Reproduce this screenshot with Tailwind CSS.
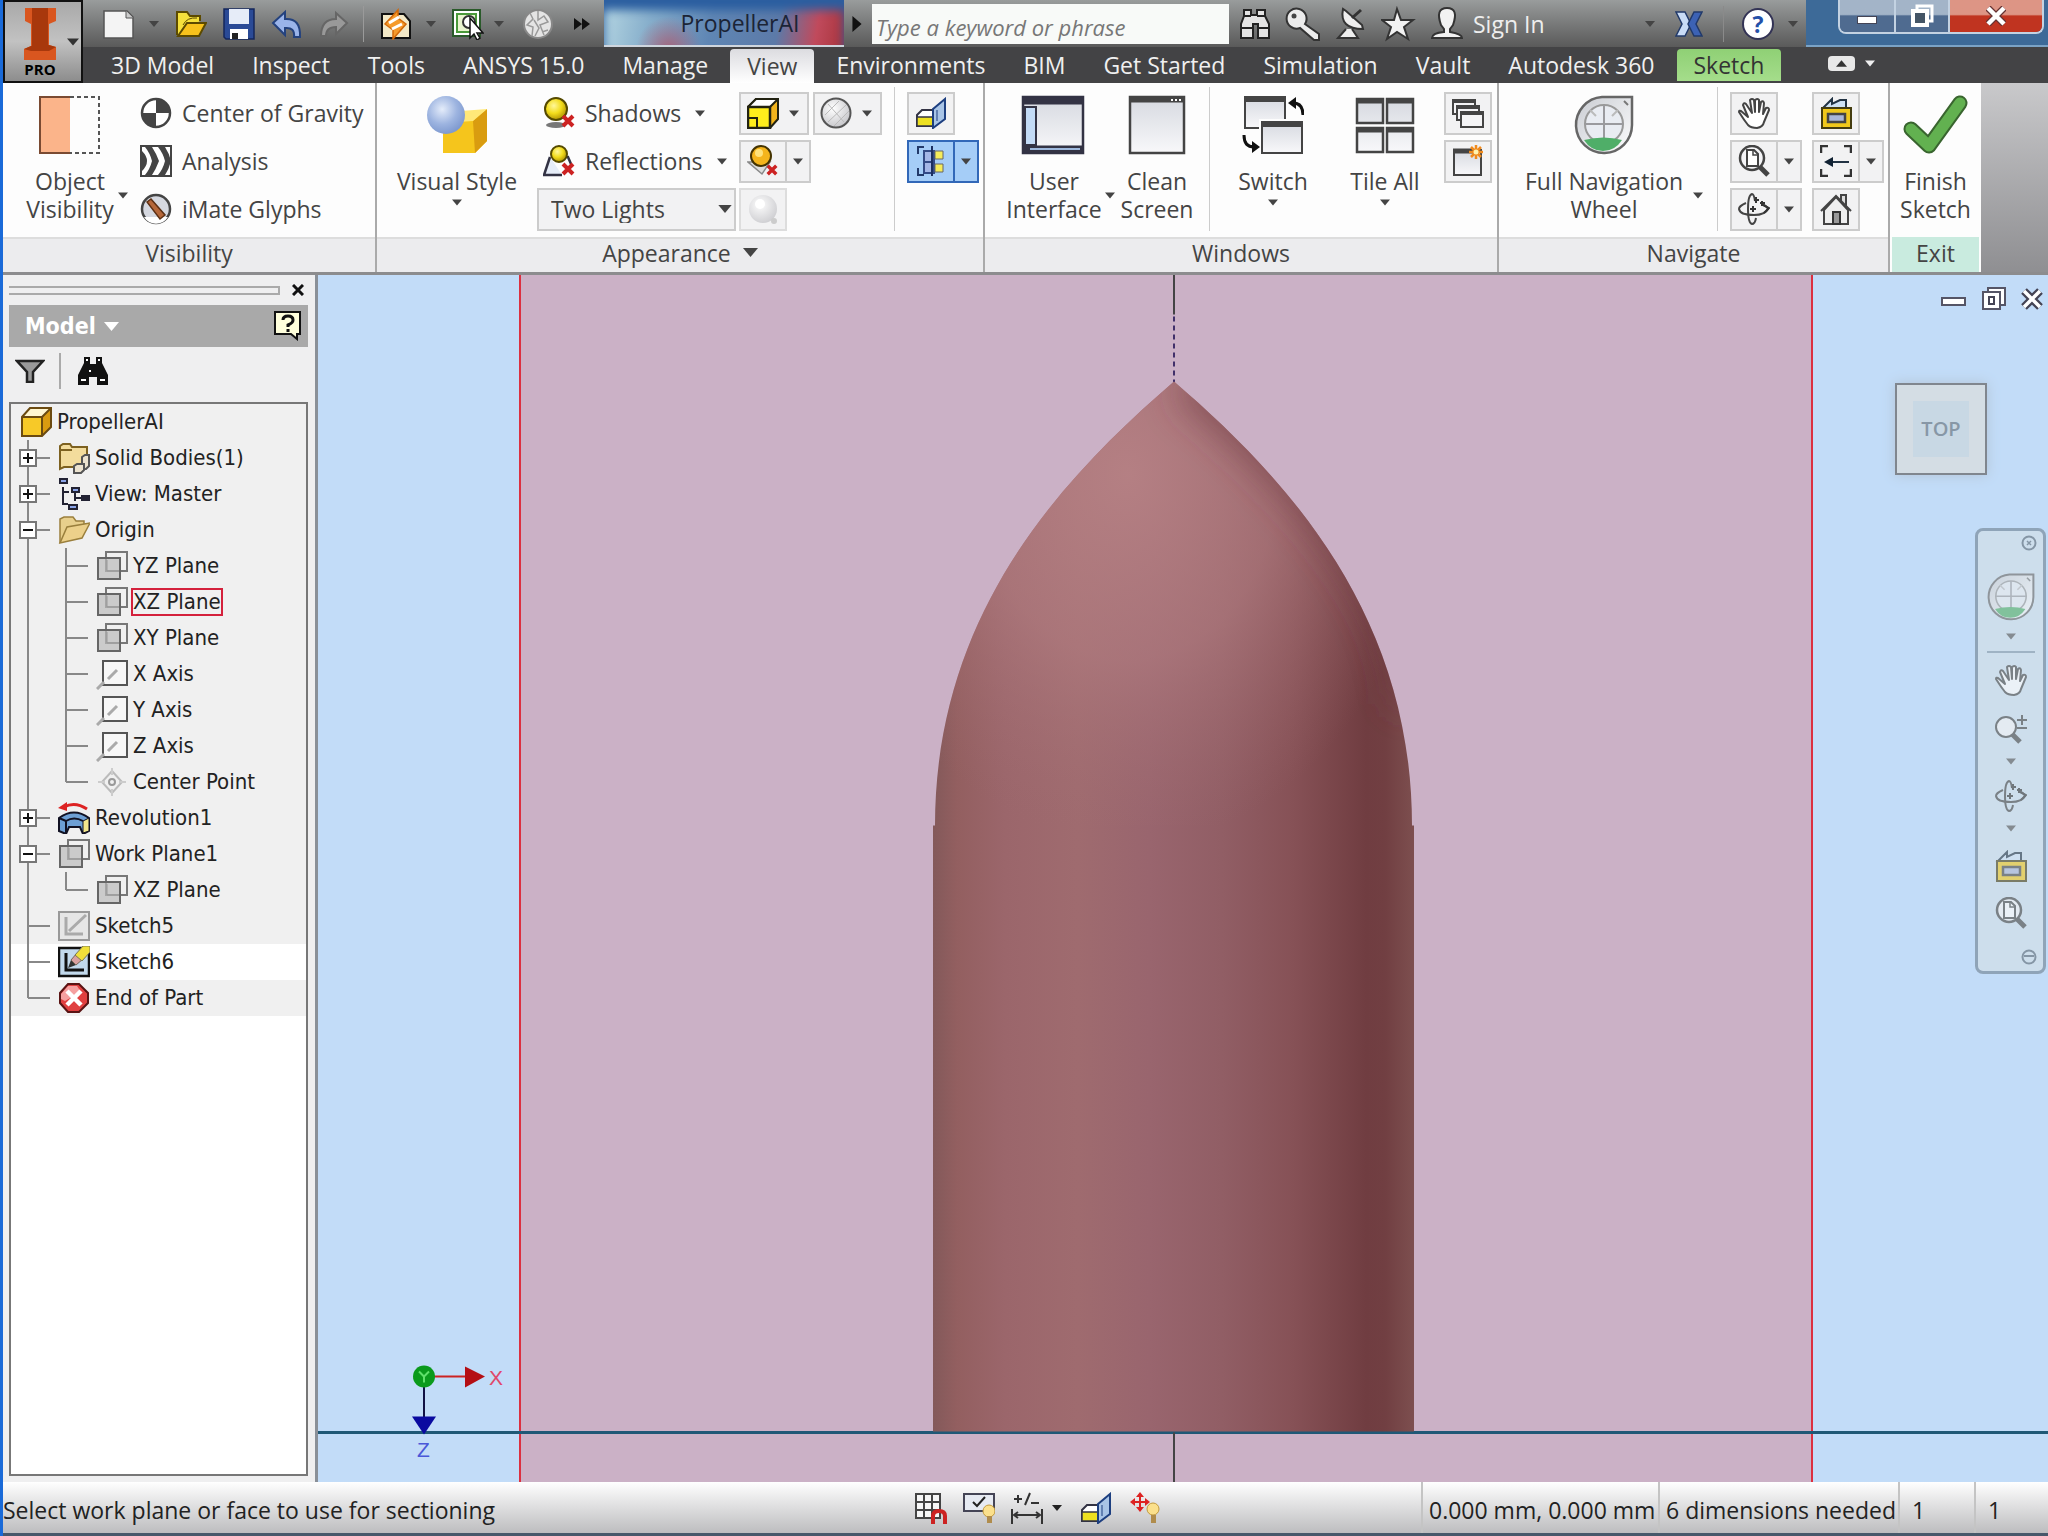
<!DOCTYPE html>
<html lang="en">
<head>
  <meta charset="UTF-8" />
  <meta name="viewport" content="width=device-width, initial-scale=1.0"/>
  <title>PropellerAI</title>
  <script src="https://cdn.jsdelivr.net/npm/@tailwindcss/browser@4"></script>
</head>
<body class="h-screen flex flex-col overflow-hidden border-l-3 border-[#1a6ad8] bg-[#efeff0] font-['Open_Sans','Noto_Sans',sans-serif] text-[23px] leading-7 text-[#444]">

  <!-- shared icons -->
  <svg class="absolute size-0">
    <defs>
      <linearGradient id="glass" x1="0" y1="0" x2="1" y2="1"><stop offset="0" stop-color="#c9ccd2"/><stop offset="1" stop-color="#fdfdfe"/></linearGradient>
      <linearGradient id="pane" x1="0" y1="0" x2="0" y2="1"><stop offset="0" stop-color="#d6d9e0"/><stop offset="1" stop-color="#f8f8fa"/></linearGradient>
      <radialGradient id="ball" cx=".4" cy=".35" r=".7"><stop offset="0" stop-color="#fff79a"/><stop offset=".5" stop-color="#f2dc1c"/><stop offset="1" stop-color="#a88a00"/></radialGradient>
      <radialGradient id="blueball" cx=".4" cy=".35" r=".65"><stop offset="0" stop-color="#e4ecfa"/><stop offset=".6" stop-color="#9db4e0"/><stop offset="1" stop-color="#7f9ad0"/></radialGradient>
      <radialGradient id="grayball" cx=".4" cy=".35" r=".7"><stop offset="0" stop-color="#fff"/><stop offset="1" stop-color="#c4c4c8"/></radialGradient>
    </defs>
    <symbol id="caret" viewBox="0 0 10 6"><path d="M0 0h10L5 6z" fill="currentColor"/></symbol>
    <symbol id="redx" viewBox="0 0 14 14"><path d="M2 2l10 10M12 2L2 12" stroke="#c22" stroke-width="4"/></symbol>
    <symbol id="plane" viewBox="0 0 32 32">
      <rect x="10" y="2" width="21" height="19" fill="#f0f0f0" stroke="#777" stroke-width="2"/>
      <rect x="2" y="8" width="22" height="21" fill="#bbb" fill-opacity=".7" stroke="#666" stroke-width="2"/>
      <path d="M11 10v11h12" fill="none" stroke="#999"/>
    </symbol>
    <symbol id="axis" viewBox="0 0 32 32">
      <rect x="7" y="3" width="24" height="24" fill="#f7f7f7" stroke="#555" stroke-width="2"/>
      <path d="M1 31l7-7M12 21l9-9" stroke="#aaa" stroke-width="3"/>
    </symbol>
    <symbol id="point" viewBox="0 0 32 32">
      <path d="M16 5l10 11-10 11L6 16z" fill="none" stroke="#bbb" stroke-width="2"/>
      <path d="M16 2v7M16 23v7M2 16h7M23 16h7" stroke="#ccc" stroke-width="2"/><circle cx="16" cy="16" r="3" fill="none" stroke="#999" stroke-width="2"/>
    </symbol>
    <symbol id="part" viewBox="0 0 32 32">
      <path d="M2 11L10 2h21L22 11z" fill="#fff6d0"/><path d="M22 11l9-9v19l-9 9z" fill="#d99a10"/><path d="M2 11h20v19H2z" fill="#f7c928"/>
      <path d="M2 11L10 2h21v19l-9 9H2zM2 11h20M22 11l9-9M22 11v19" fill="none" stroke="#6b4a10" stroke-width="2"/>
    </symbol>
    <symbol id="bodies" viewBox="0 0 32 32">
      <path d="M2 4l3-2h7l2 3h15v20H6l-4 2z" fill="#f3dc9c" stroke="#7d6120" stroke-width="2"/><path d="M2 8h12" stroke="#7d6120" stroke-width="2"/>
      <path d="M24 15l3-2h4v11l-3 3h-4z" fill="#ece3cf" stroke="#555" stroke-width="2"/><path d="M16 24l3-2h7v6l-3 3h-7z" fill="#ece3cf" stroke="#555" stroke-width="2"/>
    </symbol>
    <symbol id="views" viewBox="0 0 32 32">
      <path d="M1 3h9M13 12h9M23 20h9M10 29h10" stroke="#223" stroke-width="6"/><path d="M5 9v17h5M5 14h6M17 15v8M17 20h6" fill="none" stroke="#223" stroke-width="2"/><path d="M3 3h5M15 12h5M12 29h6" stroke="#8aa4e8" stroke-width="2"/>
    </symbol>
    <symbol id="folder" viewBox="0 0 32 32">
      <path d="M2 29V5l4-2h9l3 4h8v4" fill="#e8cf8c" stroke="#9a7f3c" stroke-width="1.5"/><path d="M2 29L9 13l23-4-8 15z" fill="#ecd08a" stroke="#9a7f3c" stroke-width="1.5"/>
    </symbol>
    <symbol id="revolve" viewBox="0 0 32 32">
      <path d="M29 7Q17-1 6 5" fill="none" stroke="#d22" stroke-width="3"/><path d="M0 6l9-6v9z" fill="#d22"/>
      <path d="M1 16Q16 5 31 16v13l-6 3-3-7H11l-3 7-7-3z" fill="#6d9fd4" stroke="#112" stroke-width="2"/><path d="M25 19l6-3v13l-6 2z" fill="#f3e78c" stroke="#112"/><path d="M1 16l7 3v12M8 19q8-5 17 0" fill="none" stroke="#112" stroke-width="2"/>
    </symbol>
    <symbol id="sketchoff" viewBox="0 0 32 32">
      <rect x="1" y="2" width="30" height="28" fill="#e6e6e6" stroke="#999" stroke-width="2"/><path d="M8 7v17h17M11 21L28 5" fill="none" stroke="#aaa" stroke-width="3"/>
    </symbol>
    <symbol id="sketchon" viewBox="0 0 32 32">
      <rect x="1" y="2" width="30" height="28" fill="#c2d9ec" stroke="#111" stroke-width="2.5"/><path d="M8 7v17h18" fill="none" stroke="#111" stroke-width="3"/>
      <path d="M10 22l3-8 5 5z" fill="#333"/><path d="M13 14l6-7 6 6-7 6z" fill="#d9a0a0" stroke="#765" /><path d="M17 9l8-9h7v6l-8 9z" fill="#f0e03a" stroke="#775"/>
    </symbol>
    <symbol id="endpart" viewBox="0 0 32 32">
      <path d="M10 2h11l9 9v10l-9 9H10l-8-9V11z" fill="#e04040" stroke="#5a1414" stroke-width="2"/><path d="M10 4h9l4 6-16 9-4-2v-5z" fill="#f5a0a0"/><path d="M9 9l14 14M23 9L9 23" stroke="#fff" stroke-width="4.500"/>
    </symbol>
    <symbol id="wheel" viewBox="0 0 60 60">
      <path d="M58 2H28A28 28 0 1 0 58 30z" fill="url(#glass)" stroke="#666" stroke-width="2.500"/>
      <circle cx="30" cy="29" r="19" fill="#e9ecf2" stroke="#999" stroke-width="2"/><path d="M30 10v38M11 29h38" stroke="#9a9a9e" stroke-width="2"/><path d="M16 15l6 6M44 15l-6 6" stroke="#bbb" stroke-width="2"/><path d="M10 45q20-5 38 0-7 11-19 11t-19-11z" fill="#4fae68"/><path d="M50 6l4 4" stroke="#777" stroke-width="2"/>
    </symbol>
    <symbol id="hand" viewBox="0 0 32 32">
      <path d="M10 20L3 14q-2-1-2 1 5 8 9 13 3 3 9 3 6-1 7-6l5-12q0-3-3-2l-3 6 1-11q-1-3-3-1l-2 10V3q-1-2-4 0v12L16 3q-2-2-4 0l2 13L8 7Q6 5 5 8z" fill="#fff" stroke="#444" stroke-width="2" stroke-linejoin="round"/>
    </symbol>
    <symbol id="zoom" viewBox="0 0 32 32">
      <path d="M21 21l9 9" stroke="#444" stroke-width="5"/><circle cx="14" cy="13" r="12" fill="#f4f4f6" stroke="#444" stroke-width="2.500"/><path d="M9 5h7l4 4v12H9z" fill="#fff" stroke="#444" stroke-width="2"/><path d="M15 5v5h5" fill="none" stroke="#444" stroke-width="1.500"/>
    </symbol>
    <symbol id="zoompm" viewBox="0 0 32 32">
      <path d="M17 21l8 8" stroke="#444" stroke-width="5"/><circle cx="11" cy="14" r="10" fill="#f4f4f6" stroke="#444" stroke-width="2"/><path d="M22 7h10M27 2v10M22 15h10" stroke="#444" stroke-width="2"/>
    </symbol>
    <symbol id="orbit" viewBox="0 0 32 32">
      <path d="M17 8Q16 1 14 1q-4 1-4 15t4 15q3 0 4-6" fill="none" stroke="#444" stroke-width="2"/><path d="M8 10q-7 3-7 6 1 6 15 6 11 0 14-6-1-3-6-5" fill="none" stroke="#444" stroke-width="2"/><path d="M25 12l6 3-5 5M12 16h6M15 13v6M16 7h5M18 4v6M22 10h5M24 8v5" fill="none" stroke="#333" stroke-width="2"/>
    </symbol>
    <symbol id="lookat" viewBox="0 0 32 32">
      <path d="M3 11L12 2v5l8-4 6 0v8z" fill="#cfe2f5" stroke="#234" stroke-width="2"/><rect x="2" y="11" width="29" height="20" fill="#f0c81c" stroke="#443c10" stroke-width="2"/><rect x="8" y="17" width="17" height="8" fill="#a9b6d8" stroke="#444" stroke-width="2.500"/>
    </symbol>
    <symbol id="slice" viewBox="0 0 32 32">
      <path d="M2 18l5-5h12v16H2z" fill="#fff" stroke="#334" stroke-width="2"/><path d="M2 20h16v9H2z" fill="#ede021" stroke="#334" stroke-width="1.500"/><path d="M18 12L30 2v20L18 31z" fill="#a8c4e6" stroke="#1d3f80" stroke-width="2"/><path d="M22 13v11" stroke="#1d3f80"/>
    </symbol>
    <symbol id="dochelp" viewBox="0 0 28 30"><path d="M1 1h25v22h-3v5l-6-5H1z" fill="#ffffdc" stroke="#111" stroke-width="2"/><path d="M9 9q0-4 5-4t5 4q0 3-5 5v2" fill="none" stroke="#111" stroke-width="3"/><path d="M12.500 18h3v3h-3z" fill="#111"/></symbol>
  </svg>

  <header class="flex h-[83px] bg-[#434345]">
    <button aria-label="Application menu" class="flex w-20 shrink-0 items-center border-2 border-[#111] bg-linear-to-b from-[#a9a9a9] via-[#c2c2c2] to-[#8d8d8d]">
      <span class="flex w-[62px] flex-col items-center pl-2">
        <svg class="h-[54px] w-9" viewBox="0 0 36 54"><path d="M3 1h31v13l-7 3v21l7 2v13H2V42l7-3V17l-6-3z" fill="#d9561f"/><path d="M10 1h16v38H10zM2 42l7-3 18-1 7 2-7 4H9z" fill="#a8380c"/></svg>
        <b class="text-[15px] leading-4 text-black">PRO</b>
      </span>
      <svg class="h-2 w-3 text-[#333]"><use href="#caret"/></svg>
    </button>
    <div class="flex min-w-0 flex-1 flex-col">
      <!-- quick access bar -->
      <div class="flex h-[47px] items-center bg-linear-to-b from-[#999c9c] to-[#5a5a5a]">
        <button aria-label="New" class="ml-5"><svg class="size-8" viewBox="0 0 32 32"><path d="M1 3h23l6 6v21H1z" fill="#f4f4f4" stroke="#555" stroke-width="1.500"/><path d="M23 3v7h7" fill="#ccc" stroke="#555"/></svg></button>
        <svg class="ml-[14px] h-[6px] w-[10px] text-[#444]"><use href="#caret"/></svg>
        <button aria-label="Open" class="ml-4"><svg class="size-8" viewBox="0 0 32 32"><path d="M2 27V4h10l3 4h10v5" fill="#f5e03c" stroke="#5c4a00" stroke-width="2"/><path d="M3 28l9-13h19l-7 13z" fill="#f7c21c" stroke="#5c4a00" stroke-width="2"/><path d="M8 17q4-8 14-7" fill="none" stroke="#5c4a00"/></svg></button>
        <button aria-label="Save" class="ml-4"><svg class="size-8" viewBox="0 0 32 32"><path d="M1 1h30v30H3l-2-2z" fill="#2a4a96" stroke="#14275c" stroke-width="1.500"/><path d="M6 1h20v15H6z" fill="#e6ecf8"/><path d="M7 21h18v10H7z" fill="#fff"/><path d="M9 25h6v6H9z" fill="#222"/></svg></button>
        <button aria-label="Undo" class="ml-4"><svg class="size-8" viewBox="0 0 32 32"><path d="M2 15L14 4v7q16-1 15 18h-6q1-10-9-9v7z" fill="#9ab4ea" stroke="#24427e" stroke-width="2"/></svg></button>
        <button aria-label="Redo" class="ml-[14px]"><svg class="size-8" viewBox="0 0 32 32"><path d="M30 15L19 5v6Q4 11 4 28h5q0-9 10-9v7z" fill="#999" stroke="#666" stroke-width="2"/></svg></button>
        <span class="ml-[14px] h-9 w-px bg-[#9a9a9a]"></span>
        <button aria-label="Update" class="ml-4"><svg class="size-8" viewBox="0 0 32 32"><path d="M2 6h22l6 7v17H2z" fill="#f3e9c8" stroke="#111" stroke-width="2"/><path d="M5 16L18 2v8l8 6-13 15v-9z" fill="#f59a2b" stroke="#d2690a" stroke-width="1.500"/><path d="M9 15l10-6M12 21l10-5" stroke="#fff" stroke-width="3"/></svg></button>
        <svg class="ml-[14px] h-[6px] w-[10px] text-[#444]"><use href="#caret"/></svg>
        <button aria-label="Select" class="ml-4"><svg class="size-8" viewBox="0 0 32 32"><rect x="1" y="2" width="27" height="26" fill="#fff" stroke="#2a5a2a" stroke-width="2"/><rect x="5" y="6" width="19" height="18" fill="#e9f5cf" stroke="#4a9a3a" stroke-width="2"/><circle cx="17" cy="14" r="6" fill="#fff" stroke="#333" stroke-width="2"/><path d="M18 10v20l4-4 3 6 3-2-3-5h6z" fill="#fff" stroke="#111" stroke-width="1.500"/></svg></button>
        <svg class="ml-[10px] h-[6px] w-[10px] text-[#444]"><use href="#caret"/></svg>
        <button aria-label="Appearance" class="ml-[18px]"><svg class="size-8" viewBox="0 0 32 32"><circle cx="16" cy="16" r="14" fill="#e4e4e4" stroke="#888" stroke-width="2"/><path d="M8 5l3 6-6 6 6 2-1 9M16 3v9l6-4 4 6-8 3 4 10M20 24l6-2M12 12l5 8-4 8" fill="none" stroke="#999" stroke-width="1.500"/></svg></button>
        <svg class="ml-5 h-3 w-4" viewBox="0 0 16 12"><path d="M0 0l8 6-8 6zM8 0l8 6-8 6z" fill="#111"/></svg>
        <div class="ml-[14px] flex h-[47px] w-60 items-center justify-center border-b-2 border-[#cfd6de] bg-[radial-gradient(circle_at_27%_110%,#b0566acc_0%,#b0566a00_18%),linear-gradient(100deg,#b5d6e2_0%,#86aecb_20%,#5f86b4_45%,#5c7aa8_72%,#c04a5c_88%,#a8343c_100%)] pl-8 text-[#1b2436] shadow-[inset_0_10px_10px_#2b5ea0]">PropellerAI</div>
        <svg class="ml-2 h-4 w-[10px]" viewBox="0 0 8 14"><path d="M0 0l8 7-8 7z" fill="#111"/></svg>
        <input type="text" aria-label="Search" placeholder="Type a keyword or phrase" class="ml-[10px] h-10 w-[357px] bg-[#f8faf8] px-1 pt-[6px] text-[22px] italic placeholder:text-[#777]"/>
        <button aria-label="Find" class="ml-2"><svg class="size-9" viewBox="0 0 36 36"><path d="M7 4h7v5h6V4h8v6l4 8v14H21V18h-5v14H4V18l3-8z" fill="#e4e4e4" stroke="#222" stroke-width="2"/><path d="M4 22h12M21 22h11M7 10h7M20 10h8" stroke="#222" stroke-width="2"/></svg></button>
        <button aria-label="Key" class="ml-3"><svg class="size-9" viewBox="0 0 36 36"><path d="M20 18a10 10 0 1 0-5 4l14 12h5v-6z" fill="#ececec" stroke="#333" stroke-width="2"/><circle cx="9" cy="10" r="2.500" fill="#444"/></svg></button>
        <button aria-label="Communication center" class="ml-3"><svg class="size-9" viewBox="0 0 36 36"><path d="M10 3q-4 20 20 20l-1-4L13 5z" fill="#eee" stroke="#333" stroke-width="2"/><path d="M19 12l9-8" stroke="#333" stroke-width="3"/><path d="M13 23l-8 9h20l-6-9" fill="#eee" stroke="#333" stroke-width="2"/></svg></button>
        <button aria-label="Favorites" class="ml-3"><svg class="size-9" viewBox="0 0 36 36"><path d="M16 3l4 11h12l-9 7 4 12-11-7-10 7 4-12-9-7h12z" fill="#f2f2f2" stroke="#333" stroke-width="2"/></svg></button>
        <button class="ml-3 flex items-center gap-2 text-[#eee]"><svg class="size-9" viewBox="0 0 36 36"><path d="M12 19q-6-17 6-17t6 17l-3 4v3q12 2 12 6H3q0-5 12-6v-3z" fill="#f2f2f2" stroke="#333" stroke-width="2"/></svg>Sign In</button>
        <svg class="ml-auto h-[6px] w-[10px] text-[#444]"><use href="#caret"/></svg>
        <button aria-label="Exchange apps" class="ml-5"><svg class="size-7" viewBox="0 0 28 28"><path d="M1 2h9l6 12-6 12H1l6-12z" fill="#c9dcf6" stroke="#223a6a" stroke-width="1.500"/><path d="M27 2h-8l-6 12 6 12h8l-6-12z" fill="#3c62b4" stroke="#223a6a" stroke-width="1.500"/></svg></button>
        <span class="ml-5 h-9 w-px bg-[#8a8a8a]"></span>
        <button aria-label="Help" class="ml-[18px] flex size-8 items-center justify-center rounded-full border-2 border-[#335] bg-white font-bold text-[#2450a8]">?</button>
        <svg class="mr-2 ml-[14px] h-[6px] w-[10px] text-[#444]"><use href="#caret"/></svg>
        <div class="flex h-[47px] w-[242px] items-start justify-end border-b-2 border-[#7ba3c6] bg-[#3d6a98] pr-1">
          <div class="flex h-[34px] overflow-hidden rounded-b-lg border-2 border-t-0 border-[#c3d2e2]">
            <button aria-label="Minimize" class="flex w-14 items-center justify-center border-r-2 border-[#c3d2e2] bg-linear-to-b from-[#a3b4c8] from-45% to-[#4f6b90] to-50%"><span class="mt-2 h-2 w-5 border border-[#445] bg-white"></span></button>
            <button aria-label="Restore" class="flex w-[54px] items-center justify-center border-r-2 border-[#c3d2e2] bg-linear-to-b from-[#a3b4c8] from-45% to-[#4f6b90] to-50%"><svg class="size-6" viewBox="0 0 24 24"><path d="M7 6V2h15v15h-4" fill="none" stroke="#fff" stroke-width="3"/><rect x="3" y="7" width="14" height="14" fill="#456" stroke="#fff" stroke-width="4"/></svg></button>
            <button aria-label="Close" class="flex w-[92px] items-center justify-center bg-linear-to-b from-[#dd9585] from-45% to-[#c03420] to-50%"><svg class="size-5" viewBox="0 0 20 20"><path d="M2 2l16 16M18 2L2 18" stroke="#633" stroke-width="7"/><path d="M2 2l16 16M18 2L2 18" stroke="#fff" stroke-width="4.500"/></svg></button>
          </div>
        </div>
      </div>
      <!-- ribbon tabs -->
      <nav class="flex h-9 items-end pl-[9px] text-[#f0f0f0]">
        <button class="h-9 px-[19px]">3D Model</button>
        <button class="h-9 px-[19px]">Inspect</button>
        <button class="h-9 px-[19px]">Tools</button>
        <button class="h-9 px-[19px]">ANSYS 15.0</button>
        <button class="h-9 px-[19px]">Manage</button>
        <button class="mx-[3px] h-[34px] rounded-t-sm bg-linear-to-b from-[#dcdce0] to-white px-[17px] text-[#444]">View</button>
        <button class="h-9 px-[19px]">Environments</button>
        <button class="h-9 px-[19px]">BIM</button>
        <button class="h-9 px-[19px]">Get Started</button>
        <button class="h-9 px-[19px]">Simulation</button>
        <button class="h-9 px-[19px]">Vault</button>
        <button class="h-9 px-[19px]">Autodesk 360</button>
        <button class="mx-[3px] mb-[2px] h-8 rounded-t-sm bg-linear-to-b from-[#8fd075] to-[#a5dd8b] px-[17px] text-[#333]">Sketch</button>
        <button aria-label="Collapse ribbon" class="mb-3 ml-11 flex h-[15px] w-[27px] items-center justify-center rounded-sm bg-[#e8e8e8]"><svg class="h-[7px] w-[11px] rotate-180 text-[#333]"><use href="#caret"/></svg></button>
        <svg class="mb-4 ml-[10px] h-[7px] w-[10px]"><use href="#caret"/></svg>
      </nav>
    </div>
  </header>

  <!-- ribbon -->
  <div class="flex h-[192px] border-b-3 border-[#8c8c8e] bg-linear-to-b from-[#c9c9cb] to-[#8f8f92]">
    <section class="flex w-[374px] flex-col border-r-2 border-[#aaa] bg-[#fdfdfd]">
      <div class="flex flex-1">
        <button class="flex flex-col gap-3 pt-3 pl-[19px]">
          <svg class="h-15 w-24" viewBox="0 0 96 60"><rect x="18" y="2" width="30" height="56" fill="#fbb48a"/><path d="M48 2H18v56h30" fill="none" stroke="#7a4a32" stroke-width="2"/><path d="M48 2h29v56H48" fill="none" stroke="#555" stroke-width="2" stroke-dasharray="4 3"/></svg>
          <span class="flex items-center"><span class="w-24">Object<br>Visibility</span><svg class="h-[7px] w-[10px]"><use href="#caret"/></svg></span>
        </button>
        <div class="flex flex-col pt-[6px] pl-3">
          <button class="flex h-12 items-center gap-[10px]"><svg class="size-8" viewBox="0 0 32 32"><circle cx="16" cy="16" r="14" fill="#fff" stroke="#444" stroke-width="2.500"/><path d="M16 16V2a14 14 0 0 1 14 14zM16 16v14A14 14 0 0 1 2 16z" fill="#444"/></svg>Center of Gravity</button>
          <button class="flex h-12 items-center gap-[10px]"><svg class="size-8" viewBox="0 0 32 32"><rect x="1" y="1" width="30" height="30" fill="#fff" stroke="#444" stroke-width="2"/><path d="M2 6q10 10 0 20zM5 2h7q4 6 7 14-3 8-7 14H5q5-6 7-14-2-8-7-14zM18 2h7q4 6 6 14-2 8-6 14h-7q5-6 7-14-2-8-7-14z" fill="#444"/></svg>Analysis</button>
          <button class="flex h-12 items-center gap-[10px]"><svg class="size-8" viewBox="0 0 32 32"><circle cx="16" cy="16" r="14" fill="#d5d8e0" stroke="#444" stroke-width="2.500"/><path d="M4 24L28 24A14 14 0 0 1 4 24z" fill="#fff"/><path d="M7 9l4-3 14 16-5 4z" fill="#b5673a" stroke="#5c3014" stroke-width="1.500"/></svg>iMate Glyphs</button>
        </div>
      </div>
      <h2 class="flex h-[35px] items-center justify-center border-t-2 border-[#ddd] bg-[#ececee] pb-[6px]">Visibility</h2>
    </section>

    <section class="flex w-[608px] flex-col border-r-2 border-[#aaa] bg-[#fdfdfd]">
      <div class="flex flex-1">
        <button class="flex w-40 flex-col items-center pt-3">
          <svg class="h-15 w-16" viewBox="0 0 64 60"><path d="M18 28L48 24 62 14v32L50 58H18z" fill="#f5c51c"/><path d="M48 26l14-12v32L50 58z" fill="#d99c10"/><path d="M18 28l18-12 26-2-14 12z" fill="#ffe879"/><circle cx="21" cy="20" r="19" fill="url(#blueball)"/></svg>
          <span class="mt-3">Visual Style</span>
          <svg class="mt-1 h-[7px] w-[10px]"><use href="#caret"/></svg>
        </button>
        <div class="flex w-[199px] flex-col pt-[6px]">
          <button class="flex h-12 items-center gap-[10px] pl-[6px]"><svg class="size-8" viewBox="0 0 32 32"><ellipse cx="13" cy="28" rx="10" ry="3" fill="#777"/><circle cx="13" cy="12" r="11" fill="url(#ball)" stroke="#554a00" stroke-width="2"/><use href="#redx" x="18" y="17" width="14" height="14"/></svg>Shadows<svg class="ml-1 h-[7px] w-[10px]"><use href="#caret"/></svg></button>
          <button class="flex h-12 items-center gap-[10px] pl-[6px]"><svg class="size-8" viewBox="0 0 32 32"><path d="M7 12L1 30h18M22 12h3l3 7" fill="#e6edf8" stroke="#334" stroke-width="2.500"/><circle cx="16" cy="9" r="8" fill="url(#ball)" stroke="#554a00" stroke-width="2"/><use href="#redx" x="18" y="17" width="14" height="14"/></svg>Reflections<svg class="ml-1 h-[7px] w-[10px]"><use href="#caret"/></svg></button>
          <label class="relative flex h-12 items-center">
            <select aria-label="Lighting" class="h-[43px] w-full appearance-none border-2 border-[#ccc] bg-[#f2f2f3] pl-3"><option>Two Lights</option></select>
            <svg class="pointer-events-none absolute right-1 h-2 w-[14px]"><use href="#caret"/></svg>
          </label>
        </div>
        <div class="ml-[3px] flex w-[143px] flex-col pt-[6px]">
          <div class="flex h-12 items-center gap-1">
            <button aria-label="Ground plane" class="flex h-[43px] w-[70px] items-center gap-[10px] border-2 border-[#ccc] bg-[#f2f2f3] pl-[6px]"><svg class="size-8" viewBox="0 0 32 32"><path d="M1 10L9 2h22v20l-8 9H1z" fill="#f2b41c" stroke="#221" stroke-width="2"/><path d="M1 10L9 2h22l-8 8z" fill="#fff" stroke="#221" stroke-width="2"/><path d="M1 10h22v21H1z" fill="#ffee1c" stroke="#221" stroke-width="2.500"/><path d="M1 21h9v10" fill="none" stroke="#221" stroke-width="2"/></svg><svg class="h-[7px] w-[10px]"><use href="#caret"/></svg></button>
            <button aria-label="Material" class="flex h-[43px] w-[69px] items-center gap-[10px] border-2 border-[#ccc] bg-[#f2f2f3] pl-[5px]"><svg class="size-8" viewBox="0 0 32 32"><circle cx="16" cy="16" r="14.500" fill="url(#grayball)" stroke="#555" stroke-width="2"/><path d="M5 18L19 4M8 25L26 8M14 29l15-15M8 7l16 18" stroke="#bbb"/></svg><svg class="h-[7px] w-[10px]"><use href="#caret"/></svg></button>
          </div>
          <div class="flex h-12 items-center">
            <button aria-label="Ground shadow" class="flex h-[43px] w-12 items-center justify-center border-2 border-[#ccc] bg-[#f2f2f3]"><svg class="size-8" viewBox="0 0 32 32"><path d="M1 17h22l-8 12z" fill="#ddd" stroke="#888" stroke-width="1.500"/><circle cx="14" cy="11" r="10" fill="#f5b51c" stroke="#443300" stroke-width="2"/><circle cx="12" cy="8" r="4" fill="#ffe27a"/><use href="#redx" x="19" y="19" width="12" height="12"/></svg></button>
            <button aria-label="Ground shadow options" class="-ml-[2px] flex h-[43px] w-[26px] items-center justify-center border-2 border-[#ccc] bg-[#f2f2f3]"><svg class="h-[7px] w-[10px]"><use href="#caret"/></svg></button>
          </div>
          <div class="flex h-12 items-center">
            <button aria-label="Ray tracing" class="flex h-[43px] w-12 items-center justify-center border-2 border-[#ddd] bg-[#f2f2f3]"><svg class="size-8" viewBox="0 0 32 32"><circle cx="16" cy="16" r="14" fill="url(#grayball)" opacity=".8"/><circle cx="13" cy="11" r="5" fill="#fff"/><circle cx="27" cy="28" r="3" fill="#ccc"/></svg></button>
          </div>
        </div>
        <span class="mx-3 mt-1 h-[144px] w-px bg-[#ccc]"></span>
        <div class="flex flex-col pt-[6px]">
          <div class="flex h-12 items-center"><button aria-label="Slice graphics" class="flex h-[43px] w-12 items-center justify-center border-2 border-[#ccc] bg-[#f2f2f3]"><svg class="size-8"><use href="#slice"/></svg></button></div>
          <div class="flex h-12 items-center">
            <button aria-label="Section view" class="flex h-[43px] w-12 items-center justify-center border-2 border-[#3268b8] bg-[#a5cdf7]"><svg class="size-8" viewBox="0 0 32 32"><path d="M9 2H3v7M3 23v7h6" fill="none" stroke="#223a6a" stroke-width="2"/><path d="M9 6h10v22H9zM9 17h10" fill="#a4b6e6" stroke="#334a86" stroke-width="2"/><path d="M17 1v30" stroke="#1c2f60" stroke-width="2"/><path d="M20 6h8v8h-8zM20 19h8v8h-8z" fill="#f5ec5a" stroke="#666"/></svg></button>
            <button aria-label="Section view options" class="-ml-[2px] flex h-[43px] w-[26px] items-center justify-center border-2 border-[#3268b8] bg-[#a5cdf7]"><svg class="h-[7px] w-[10px]"><use href="#caret"/></svg></button>
          </div>
        </div>
      </div>
      <h2 class="flex h-[35px] items-center justify-center gap-3 border-t-2 border-[#ddd] bg-[#ececee] pb-[6px]">Appearance<svg class="h-[9px] w-[15px]"><use href="#caret"/></svg></h2>
    </section>

    <section class="flex w-[514px] flex-col border-r-2 border-[#aaa] bg-[#fdfdfd]">
      <div class="flex flex-1">
        <button class="flex flex-col gap-3 pt-3 pl-[18px]">
          <svg class="h-15 w-[102px]" viewBox="0 0 102 60"><rect x="20" y="2" width="60" height="56" fill="url(#pane)" stroke="#334" stroke-width="2.500"/><path d="M19 6h62M19 54h62" stroke="#334" stroke-width="7"/><path d="M27 54h50" stroke="#9db8dc" stroke-width="2"/><rect x="22" y="12" width="11" height="38" fill="#c3dbf6" stroke="#334" stroke-width="2"/></svg>
          <span class="flex items-center"><span class="w-[102px]">User<br>Interface</span><svg class="h-[7px] w-[10px]"><use href="#caret"/></svg></span>
        </button>
        <button class="flex w-[84px] flex-col items-center gap-3 pt-3">
          <svg class="h-15 w-[60px]" viewBox="0 0 60 60"><rect x="3" y="2" width="54" height="56" fill="url(#pane)" stroke="#444" stroke-width="2.500"/><path d="M2 5h56" stroke="#444" stroke-width="5"/><path d="M44 5h10" stroke="#fff" stroke-width="2" stroke-dasharray="2 2"/></svg>
          <span>Clean<br>Screen</span>
        </button>
        <span class="mt-1 ml-[10px] h-[144px] w-px bg-[#ccc]"></span>
        <button class="flex w-[126px] flex-col items-center pt-3">
          <svg class="h-15 w-[62px]" viewBox="0 0 62 60"><rect x="3" y="2" width="40" height="31" fill="url(#pane)" stroke="#444" stroke-width="2"/><path d="M2 4h42" stroke="#444" stroke-width="6"/><path d="M17 24h45v36H17z" fill="#fdfdfd"/><rect x="20" y="27" width="40" height="31" fill="url(#pane)" stroke="#444" stroke-width="2"/><path d="M19 29h42" stroke="#444" stroke-width="6"/><path d="M61 20q0-12-10-12M2 40q0 12 10 12" fill="none" stroke="#111" stroke-width="3"/><path d="M46 8l8-6v12zM18 52l-8-6v12z" fill="#111"/></svg>
          <span class="mt-3">Switch</span>
          <svg class="mt-1 h-[7px] w-[10px]"><use href="#caret"/></svg>
        </button>
        <button class="flex w-[98px] flex-col items-center pt-3">
          <svg class="h-15 w-[60px]" viewBox="0 0 60 60"><path d="M2 4h26v24H2zM32 4h26v24H32zM2 33h26v24H2zM32 33h26v24H32z" fill="url(#pane)" stroke="#444" stroke-width="2.500"/><path d="M1 6h28M31 6h28M1 35h28M31 35h28" stroke="#444" stroke-width="5"/></svg>
          <span class="mt-3">Tile All</span>
          <svg class="mt-1 h-[7px] w-[10px]"><use href="#caret"/></svg>
        </button>
        <div class="ml-[10px] flex flex-col pt-[6px]">
          <div class="flex h-12 items-center"><button aria-label="Cascade" class="flex h-[43px] w-12 items-center justify-center border-2 border-[#ccc] bg-[#f2f2f3]"><svg class="size-8" viewBox="0 0 32 32"><path d="M1 3h22v14H1z" fill="#f4f4f6" stroke="#444" stroke-width="2"/><path d="M0 4h24" stroke="#444" stroke-width="4"/><path d="M5 9h22v14H5z" fill="#f4f4f6" stroke="#444" stroke-width="2"/><path d="M4 10h24" stroke="#444" stroke-width="4"/><path d="M9 15h22v15H9z" fill="#f4f4f6" stroke="#444" stroke-width="2"/><path d="M8 16h24" stroke="#444" stroke-width="4"/></svg></button></div>
          <div class="flex h-12 items-center"><button aria-label="New window" class="flex h-[43px] w-12 items-center justify-center border-2 border-[#ccc] bg-[#f2f2f3]"><svg class="size-8" viewBox="0 0 32 32"><rect x="2" y="5" width="27" height="25" fill="url(#pane)" stroke="#444" stroke-width="2"/><path d="M1 6h20" stroke="#444" stroke-width="5"/><path d="M24 0v14M17 7h14M19 2l10 10M29 2L19 12" stroke="#f08a1c" stroke-width="2.500"/><circle cx="24" cy="7" r="2.500" fill="#fff3b0"/></svg></button></div>
        </div>
      </div>
      <h2 class="flex h-[35px] items-center justify-center border-t-2 border-[#ddd] bg-[#ececee] pb-[6px]">Windows</h2>
    </section>

    <section class="flex w-[391px] flex-col border-r-2 border-[#aaa] bg-[#fdfdfd]">
      <div class="flex flex-1">
        <button class="flex flex-col gap-3 pt-3 pl-4">
          <svg class="h-15 w-[178px]"><use href="#wheel"/></svg>
          <span class="flex items-center"><span class="w-[178px]">Full Navigation<br>Wheel</span><svg class="h-[7px] w-[10px]"><use href="#caret"/></svg></span>
        </button>
        <span class="mt-1 ml-[14px] h-[144px] w-px bg-[#ccc]"></span>
        <div class="ml-3 flex w-[72px] flex-col pt-[6px]">
          <div class="flex h-12 items-center"><button aria-label="Pan" class="flex h-[43px] w-12 items-center justify-center border-2 border-[#ccc] bg-[#f2f2f3]"><svg class="size-8"><use href="#hand"/></svg></button></div>
          <div class="flex h-12 items-center">
            <button aria-label="Zoom all" class="flex h-[43px] w-12 items-center justify-center border-2 border-[#ccc] bg-[#f2f2f3]"><svg class="size-8"><use href="#zoom"/></svg></button>
            <button aria-label="Zoom options" class="-ml-[2px] flex h-[43px] w-[26px] items-center justify-center border-2 border-[#ccc] bg-[#f2f2f3]"><svg class="h-[7px] w-[10px]"><use href="#caret"/></svg></button>
          </div>
          <div class="flex h-12 items-center">
            <button aria-label="Orbit" class="flex h-[43px] w-12 items-center justify-center border-2 border-[#ccc] bg-[#f2f2f3]"><svg class="size-8"><use href="#orbit"/></svg></button>
            <button aria-label="Orbit options" class="-ml-[2px] flex h-[43px] w-[26px] items-center justify-center border-2 border-[#ccc] bg-[#f2f2f3]"><svg class="h-[7px] w-[10px]"><use href="#caret"/></svg></button>
          </div>
        </div>
        <div class="ml-[10px] flex w-[72px] flex-col pt-[6px]">
          <div class="flex h-12 items-center"><button aria-label="Look at" class="flex h-[43px] w-12 items-center justify-center border-2 border-[#ccc] bg-[#f2f2f3]"><svg class="size-8"><use href="#lookat"/></svg></button></div>
          <div class="flex h-12 items-center">
            <button aria-label="Previous view" class="flex h-[43px] w-12 items-center justify-center border-2 border-[#ccc] bg-[#f2f2f3]"><svg class="size-8" viewBox="0 0 32 32"><path d="M1 8V1h7M24 1h7v7M31 24v7h-7M8 31H1v-7" fill="none" stroke="#333" stroke-width="2.500"/><path d="M10 17h19" stroke="#234" stroke-width="2"/><path d="M4 17l9-5v10z" fill="#123"/></svg></button>
            <button aria-label="Previous view options" class="-ml-[2px] flex h-[43px] w-[26px] items-center justify-center border-2 border-[#ccc] bg-[#f2f2f3]"><svg class="h-[7px] w-[10px]"><use href="#caret"/></svg></button>
          </div>
          <div class="flex h-12 items-center"><button aria-label="Home view" class="flex h-[43px] w-12 items-center justify-center border-2 border-[#ccc] bg-[#f2f2f3]"><svg class="size-8" viewBox="0 0 32 32"><path d="M21 8V2h5v11" fill="#ddd" stroke="#444" stroke-width="2"/><path d="M4 17v14h24V17L16 4z" fill="#eee" stroke="#444" stroke-width="2"/><path d="M1 18L16 3l15 15" fill="none" stroke="#444" stroke-width="2"/><path d="M13 31V19h7v12z" fill="#999" stroke="#333" stroke-width="2"/></svg></button></div>
        </div>
      </div>
      <h2 class="flex h-[35px] items-center justify-center border-t-2 border-[#ddd] bg-[#ececee] pb-[6px]">Navigate</h2>
    </section>

    <section class="flex w-[91px] flex-col bg-[#fdfdfd]">
      <button class="flex flex-1 flex-col items-center gap-3 pt-3">
        <svg class="h-15 w-[66px]" viewBox="0 0 66 60"><path d="M8 34L26 51 57 8" fill="none" stroke="#39652f" stroke-width="15" stroke-linecap="round" stroke-linejoin="round"/><path d="M8 34L26 51 57 8" fill="none" stroke="#62b150" stroke-width="11" stroke-linecap="round" stroke-linejoin="round"/></svg>
        <span>Finish<br>Sketch</span>
      </button>
      <h2 class="mx-[2px] flex h-[35px] items-center justify-center bg-[#c9ebdf] pb-1">Exit</h2>
    </section>
  </div>

  <main class="flex min-h-0 flex-1">
    <!-- model browser -->
    <aside class="flex w-[315px] shrink-0 flex-col border-r-3 border-[#8a9098] pr-[7px] pl-[6px] font-['DejaVu_Sans_Condensed','DejaVu_Sans',sans-serif] text-[22px] text-[#222]">
      <div class="flex h-[30px] items-center gap-3 pr-1">
        <span class="h-[9px] flex-1 border-y-2 border-r-2 border-[#aaa]"></span>
        <button aria-label="Close panel"><svg class="size-3" viewBox="0 0 12 12"><path d="M1 1l10 10M11 1L1 11" stroke="#111" stroke-width="3"/></svg></button>
      </div>
      <div class="flex h-[42px] items-center bg-[#a9a9a9] px-4 pr-[6px]">
        <button class="flex items-center gap-2 text-[23px] font-bold text-white">Model<svg class="h-[9px] w-[15px]"><use href="#caret"/></svg></button>
        <button aria-label="Help" class="ml-auto"><svg class="h-[30px] w-7"><use href="#dochelp"/></svg></button>
      </div>
      <div class="flex h-[55px] items-center pb-2 pl-[6px]">
        <button aria-label="Filter"><svg class="h-6 w-[30px]" viewBox="0 0 30 24"><path d="M2 2h26L18 13v10h-6V13z" fill="#999" stroke="#222" stroke-width="2.500"/></svg></button>
        <span class="ml-[14px] h-9 w-[2px] bg-[#aaa]"></span>
        <button aria-label="Find" class="ml-4"><svg class="h-7 w-8" viewBox="0 0 32 28"><path d="M7 0h6v7h6V0h6v6l6 12v10H20v-8h-8v8H1V18L7 6z" fill="#111"/><path d="M9 3h2M21 3h2M4 23h5M23 23h5M12 14h2" stroke="#fff" stroke-width="2"/></svg></button>
      </div>
      <ul id="tree" class="mb-[6px] flex-1 border-2 border-[#777] bg-white"></ul>
    </aside>

    <!-- graphics window -->
    <div class="relative min-w-0 flex-1 overflow-hidden bg-[#c2dcf8]">
      <svg class="absolute inset-0 h-full w-full" viewBox="0 0 1730 1208" preserveAspectRatio="xMidYMid slice">
        <defs>
          <linearGradient id="cyl"><stop offset="0" stop-color="#83595a"/><stop offset=".05" stop-color="#935f60"/><stop offset=".15" stop-color="#9b666b"/><stop offset=".3" stop-color="#9f6b6f"/><stop offset=".45" stop-color="#99656e"/><stop offset=".6" stop-color="#915e65"/><stop offset=".75" stop-color="#865156"/><stop offset=".9" stop-color="#703d41"/><stop offset=".94" stop-color="#713f42"/><stop offset="1" stop-color="#7d4f4f"/></linearGradient>
          <radialGradient id="shine" gradientUnits="userSpaceOnUse" cx="0" cy="0" r="1" gradientTransform="translate(810 200) scale(300 370)"><stop offset="0" stop-color="#b98487" stop-opacity=".85"/><stop offset=".5" stop-color="#b27d81" stop-opacity=".6"/><stop offset="1" stop-color="#a06b70" stop-opacity="0"/></radialGradient>
          <filter id="soft" x="-50%" y="-50%" width="200%" height="200%"><feGaussianBlur stdDeviation="18"/></filter>
          <clipPath id="noseclip"><path d="M856 107C966 202 1094 337 1094 551H617C617 337 746 202 856 107z"/></clipPath>
        </defs>
        <rect x="202" y="0" width="1292" height="1208" fill="#cbb1c6"/>
        <path d="M202 0v1208M1494 0v1208" stroke="#dc3040" stroke-width="2"/>
        <path d="M856 0v40" stroke="#444" stroke-width="2"/><path d="M856 42v66" stroke="#41306a" stroke-width="2" stroke-dasharray="5 4"/>
        <path d="M0 1158h1730" stroke="#1f5876" stroke-width="3"/>
        <path d="M856 1158v50" stroke="#444" stroke-width="2"/>
        <path d="M856 107C966 202 1094 337 1094 551h2v606H615V551h2C617 337 746 202 856 107z" fill="url(#cyl)"/>
        <g clip-path="url(#noseclip)">
          <path d="M600 90h510v461H600z" fill="url(#shine)"/>
          <path d="M870 107C985 202 1094 320 1094 430" fill="none" stroke="#703d41" stroke-opacity=".7" stroke-width="34" filter="url(#soft)"/>
        </g>
        <path d="M106 1102h42" stroke="#c22" stroke-width="2"/><path d="M147 1092l20 10-20 11z" fill="#b40f14"/>
        <path d="M106 1102v42" stroke="#114" stroke-width="2"/><path d="M94 1142h24l-12 18z" fill="#0a0aa0"/>
        <circle cx="106" cy="1102" r="11" fill="#0a9a1c"/><path d="M101 1097l5 5 5-5M106 1102v6" fill="none" stroke="#5fe06a" stroke-width="2"/>
        <text x="171" y="1110" font-size="21" fill="#e0486a" font-family="Liberation Sans, sans-serif">X</text>
        <text x="99" y="1182" font-size="21" fill="#4a58d8" font-family="Liberation Sans, sans-serif">Z</text>
      </svg>

      <div class="absolute top-3 right-1 flex items-center gap-[14px]">
        <button aria-label="Minimize view" class="mt-1 mr-[2px] h-[9px] w-[25px] border-2 border-[#556] bg-white"></button>
        <button aria-label="Restore view"><svg class="size-6" viewBox="0 0 24 24"><path d="M6 5V1h17v17h-4" fill="#fff" stroke="#556" stroke-width="2"/><rect x="1" y="5" width="17" height="17" fill="#fff" stroke="#556" stroke-width="2"/><rect x="7" y="10" width="5" height="7" fill="none" stroke="#445" stroke-width="2"/></svg></button>
        <button aria-label="Close view"><svg class="size-6" viewBox="0 0 24 24"><path d="M4 4l16 16M20 4L4 20" stroke="#445" stroke-width="8"/><path d="M4 4l16 16M20 4L4 20" stroke="#fff" stroke-width="3.500"/></svg></button>
      </div>

      <button class="absolute top-[108px] right-[61px] flex size-[92px] items-center justify-center border-2 border-[#80868e] bg-[#d4dde4] shadow-[0_0_12px_#b3c3d4]"><span class="flex size-14 items-center justify-center bg-[#c8d8e4] text-[20px] font-semibold text-[#8797a6]">TOP</span></button>

      <div class="absolute top-[253px] right-[2px] flex h-[446px] w-[71px] flex-col items-center rounded-lg border-3 border-[#8fa4b8] bg-[#cddeec] text-[#555]">
        <svg class="mt-1 mr-[6px] size-4 self-end opacity-60" viewBox="0 0 16 16"><circle cx="8" cy="8" r="6.500" fill="none" stroke="#567" stroke-width="2"/><path d="M6 6l4 4M10 6l-4 4" stroke="#567" stroke-width="1.500"/></svg>
        <button aria-label="Steering wheel" class="mt-[22px] opacity-60"><svg class="size-12"><use href="#wheel"/></svg></button>
        <svg class="mt-3 h-[7px] w-[10px] opacity-60"><use href="#caret"/></svg>
        <span class="mt-[11px] h-[2px] w-12 bg-[#9fb3c4]"></span>
        <button aria-label="Pan view" class="mt-[11px] opacity-60"><svg class="size-8"><use href="#hand"/></svg></button>
        <button aria-label="Zoom view" class="mt-[17px] opacity-60"><svg class="size-8"><use href="#zoompm"/></svg></button>
        <svg class="mt-[13px] h-[7px] w-[10px] opacity-60"><use href="#caret"/></svg>
        <button aria-label="Orbit view" class="mt-[15px] opacity-60"><svg class="size-8"><use href="#orbit"/></svg></button>
        <svg class="mt-[13px] h-[7px] w-[10px] opacity-60"><use href="#caret"/></svg>
        <button aria-label="Look at face" class="mt-[18px] opacity-60"><svg class="size-8"><use href="#lookat"/></svg></button>
        <button aria-label="Zoom fit" class="mt-[15px] opacity-60"><svg class="size-8"><use href="#zoom"/></svg></button>
        <svg class="mt-auto mr-[6px] mb-[6px] size-4 self-end opacity-60" viewBox="0 0 16 16"><circle cx="8" cy="8" r="6.500" fill="none" stroke="#567" stroke-width="2"/><path d="M3 7h10" stroke="#567" stroke-width="2"/></svg>
      </div>
    </div>
  </main>

  <footer class="flex h-[54px] items-center border-b-3 border-[#47586a] bg-linear-to-b from-white to-[#bdbdbf] whitespace-nowrap text-[#222]">
    <span class="w-[912px] pt-1">Select work plane or face to use for sectioning</span>
    <button aria-label="Snap to grid"><svg class="size-8" viewBox="0 0 32 32"><path d="M1 2h24v24H1zM1 10h24M1 18h24M9 2v24M17 2v24" fill="#f6f6f6" stroke="#444" stroke-width="2"/><path d="M18 32v-8q0-5 6-5t6 5v8" fill="none" stroke="#c22" stroke-width="4"/></svg></button>
    <button aria-label="Show constraints" class="ml-4"><svg class="size-8" viewBox="0 0 32 32"><rect x="1" y="2" width="30" height="17" fill="#e6eaf2" stroke="#445" stroke-width="2"/><path d="M10 10l4 4 8-9" fill="none" stroke="#222" stroke-width="2"/><circle cx="26" cy="19" r="6" fill="#fbe08c" stroke="#c39a3c"/><path d="M24 24h5v7h-5z" fill="#b08c4c"/></svg></button>
    <button aria-label="Dimension display" class="ml-4"><svg class="size-8" viewBox="0 0 32 32"><path d="M1 17v15M31 17v15M3 23h26M7 20l-4 3 4 3M25 20l4 3-4 3M3 7h8M7 3v8M19 1l-5 12M20 11h8" fill="none" stroke="#333" stroke-width="2"/></svg></button>
    <svg class="ml-[9px] h-[6px] w-[10px]"><use href="#caret"/></svg>
    <button aria-label="Slice" class="ml-[18px]"><svg class="size-8"><use href="#slice"/></svg></button>
    <button aria-label="Relax mode" class="ml-[18px]"><svg class="size-8" viewBox="0 0 32 32"><path d="M10 0l4 5H6zM10 20l4-5H6zM0 10l5-4v8zM20 10l-5-4v8z" fill="#d22"/><path d="M10 4v12M4 10h12" stroke="#d22" stroke-width="2"/><circle cx="23" cy="17" r="6" fill="#fbe08c" stroke="#c39a3c"/><path d="M21 23h5v8h-5z" fill="#b08c4c"/></svg></button>
    <div class="ml-auto flex h-full items-center">
      <span class="flex h-full w-[237px] items-center border-l-2 border-[#c4c4c4] pt-1 pl-[6px]">0.000 mm, 0.000 mm</span>
      <span class="flex h-full w-60 items-center border-l-2 border-[#c4c4c4] pt-1 pl-[6px]">6 dimensions needed</span>
      <span class="flex h-full w-19 items-center border-l-2 border-[#c4c4c4] pt-1 pl-3">1</span>
      <span class="flex h-full w-[74px] items-center border-l-2 border-[#c4c4c4] pt-1 pl-3">1</span>
    </div>
  </footer>

  <script>
    // [depth, guide, icon, label]
    const nodes = [
      [0, '', 'part', 'PropellerAI'],
      [1, 'plus', 'bodies', 'Solid Bodies(1)'],
      [1, 'plus', 'views', 'View: Master'],
      [1, 'minus', 'folder', 'Origin'],
      [2, 'tee', 'plane', 'YZ Plane'],
      [2, 'tee', 'plane', 'XZ Plane'],
      [2, 'tee', 'plane', 'XY Plane'],
      [2, 'tee', 'axis', 'X Axis'],
      [2, 'tee', 'axis', 'Y Axis'],
      [2, 'tee', 'axis', 'Z Axis'],
      [2, 'end', 'point', 'Center Point'],
      [1, 'plus', 'revolve', 'Revolution1'],
      [1, 'minus', 'plane', 'Work Plane1'],
      [2, 'end', 'plane', 'XZ Plane'],
      [1, 'tee', 'sketchoff', 'Sketch5'],
      [1, 'tee', 'sketchon', 'Sketch6'],
      [1, 'end', 'endpart', 'End of Part']
    ];
    const highlighted = 5;
    const active = 15;

    // branch lines; x is where the vertical line runs inside the cell
    function guide(kind, x, end) {
      let d = `M${x} 0V${kind === 'end' ? 18 : 36}`;
      if (kind !== 'line') d += `M${x} 18H${end}`;
      let box = '';
      if (kind === 'plus' || kind === 'minus') {
        box = `<rect x="${x - 8}" y="10" width="16" height="16" fill="#fff" stroke="#777" stroke-width="2"/>
          <path d="M${x - 5} 18h10${kind === 'plus' ? `M${x} 13v10` : ''}" stroke="#111" stroke-width="2"/>`;
      }
      return `<path d="${d}" fill="none" stroke="#888" stroke-width="2"/>${box}`;
    }

    document.getElementById('tree').innerHTML = nodes.map(([depth, kind, icon, label], i) => {
      let cells = '<span class="w-[9px] shrink-0"></span>';
      if (depth === 1) cells = `<svg class="h-9 w-[47px] shrink-0">${guide(kind, 17, 39)}</svg>`;
      // the outer branch stops at End of Part, so every nested row carries it
      if (depth === 2) cells = `<svg class="h-9 w-[47px] shrink-0">${guide('line', 17)}</svg><svg class="h-9 w-[38px] shrink-0">${guide(kind, 8, 30)}</svg>`;
      return `
        <li class="flex h-9 items-center ${i === active ? 'bg-white' : 'bg-[#f0f0f0]'}">
          ${cells}
          <svg class="size-8 shrink-0"><use href="#${icon}"/></svg>
          <span class="ml-[5px] whitespace-nowrap leading-6 ${i === highlighted ? 'outline-2 outline-[#d4213c]' : ''}">${label}</span>
        </li>`;
    }).join('');
  </script>
</body>
</html>
